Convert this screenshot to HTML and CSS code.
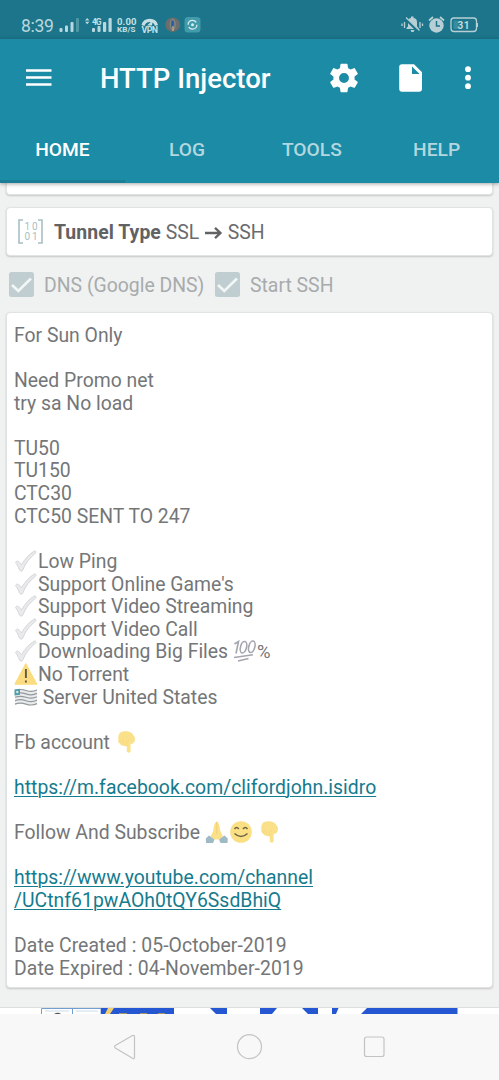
FILE: index.html
```html
<!DOCTYPE html>
<html lang="en">
<head>
<meta charset="utf-8">
<title>HTTP Injector</title>
<link rel="stylesheet" href="styles.css">
</head>
<body>
<svg class="defs" aria-hidden="true">
  <symbol id="tick" viewBox="0 0 24 22"><path d="M1.500 12.500 C3 10 5 11 7.500 14.800 C11 9 15 4 20.500 1 C21.800 .6 22.500 2 21.500 3.200 C15.500 8 11.500 13 8.800 20 C8 21.800 6.200 21.500 5.300 19.600 C4.400 17 3.300 14.800 1.500 12.500Z" fill="#e9eaec" stroke="#d0d2d4" stroke-width=".9"/></symbol>
  <symbol id="point" viewBox="0 0 20 22"><path d="M4 1 C8-.2 12 .2 15 2.2 L17.7 6 C18.4 9 17.5 12 15 12.9 L13.6 12.6 V20 C13.5 22.2 10 22.2 9.8 20 V15 C8.4 15.6 7 15.2 6.4 14.4 C4.8 14.9 3.2 13.8 3 12.4 C1.4 11.9.9 10 1.4 8.6 C.9 5.8 1.5 2.5 4 1Z" fill="#fbe08a"/><path d="M5.7 8.7 6.3 14 M3 8.8 3.2 12 M9.8 15 9.500 10.5 12 9.5" fill="none" stroke="#f5d477" stroke-width=".7"/></symbol>
  <symbol id="checkbox" viewBox="0 0 25 25"><rect width="25" height="25" rx="2.5" fill="#c0ced1"/><path d="M3 13 9.3 19 22 6.5" fill="none" stroke="#f3f6f6" stroke-width="2.6"/></symbol>
</svg>
<div class="screen">
  <header class="status">
    <span class="clock">8:39</span>
    <svg class="status-left" width="145" height="22" viewBox="57 14 145 22">
      <g fill="#b9d7de"><rect x="59.5" y="28" width="3" height="4" rx="1"/><rect x="65" y="25.500" width="3" height="6.500" rx="1"/><rect x="70.500" y="22" width="3" height="10" rx="1"/><rect x="76" y="18" width="3" height="14" rx="1" fill="#4d98a5"/>
      <path d="M85 20.500 87.200 18 89.400 20.500Z M85 21.700 87.200 24.200 89.400 21.700Z"/><rect x="92" y="28" width="3" height="4" rx="1"/><rect x="97.500" y="26" width="3" height="6" rx="1"/><rect x="103" y="22" width="3.200" height="10" rx="1"/><rect x="108.500" y="18" width="3.200" height="14" rx="1"/></g>
      <g class="tiny"><text x="92" y="24.500" font-size="8.500" textLength="9.500">4G</text><text x="117" y="24.500" font-size="9.500" textLength="19.500">0.00</text><text x="117" y="32" font-size="8" textLength="18.500">KB/S</text><text x="141.500" y="33" font-size="8.800" textLength="16.500">VPN</text></g>
      <path d="M143 25.500 A7 7 0 0 1 156.500 25.500" fill="none" stroke="#c5e0e4" stroke-width="3.200"/><path d="M147 25.500 L153 20 L152 25.500Z" fill="#c5e0e4"/>
      <circle cx="172.700" cy="24.700" r="7.300" fill="#6b6e6d"/><ellipse cx="172.700" cy="24.500" rx="2.500" ry="5.300" fill="none" stroke="#8b949c" stroke-width=".8"/><path d="M172.500 21V27" stroke="#285a9b" stroke-width="1.800"/><path d="M173 26V31" stroke="#e2bd8b"/>
      <rect x="184.500" y="17" width="16" height="15.500" rx="3.500" fill="#429baa"/><circle cx="192.500" cy="24.700" r="4.400" fill="none" stroke="#d6edef" stroke-width="1.300" stroke-dasharray="11 2.500"/><circle cx="192.500" cy="24.700" r="1.500" fill="#d6edef"/>
    </svg>
    <svg class="status-right" width="80" height="22" viewBox="400 14 80 22">
      <g fill="#b8d0d5"><path d="M406.500 29 V28 L408 26.500 V22 C408 19.500 409.500 18 411 17.700 V16.500 H413.500 V17.700 C416 18.300 417 20 417 22 V26.500 L418.500 28 V29Z M410.500 30H414.500L413.500 32H411.500Z"/><path d="M405 18 418.500 31.500" stroke="#1c758a" stroke-width="3"/><path d="M406 17.500 419.500 30.500 M404.500 22V28 M402 23.500V26 M420 22V28 M422.500 23.500V26" fill="none" stroke="#b8d0d5" stroke-width="1.300"/>
      <circle cx="436.500" cy="25.500" r="7.200"/><path d="M429 20.500 433 17 M440 17 444 20.500" stroke="#b8d0d5" stroke-width="1.700"/></g><path d="M436.500 21V26H440" fill="none" stroke="#1c758a" stroke-width="1.500"/>
      <rect x="451" y="18" width="25.500" height="13.500" rx="3" fill="none" stroke="#b8d0d5" stroke-width="1.300"/><rect x="453.500" y="20.500" width="5" height="8.500" fill="#378d9d"/><path d="M477.300 23V27" stroke="#b8d0d5" stroke-width="1.400"/><text class="battery" x="457.500" y="29" textLength="12">31</text>
    </svg>
  </header>
  <div class="appbar">
    <div class="toolbar">
      <svg class="menu" width="26" height="18"><path d="M0 1.500H25.500M0 8.500H25.500M0 15.500H25.500" stroke="#fff" stroke-width="2.600"/></svg>
      <h1 class="title">HTTP Injector</h1>
      <svg class="gear" width="34" height="34" viewBox="0 0 24 24"><path fill="#fff" d="M19.430 12.980c.04-.32.070-.64.070-.98s-.03-.66-.07-.98l2.110-1.650c.19-.15.240-.42.120-.64l-2-3.460c-.12-.22-.39-.3-.61-.22l-2.490 1c-.52-.4-1.080-.73-1.690-.98l-.38-2.650A.488.488 0 0 0 14 2h-4c-.25 0-.46.18-.49.42l-.38 2.650c-.61.250-1.170.590-1.690.98l-2.490-1c-.23-.09-.49 0-.61.220l-2 3.460c-.13.220-.07.490.120.640l2.110 1.650c-.04.320-.07.650-.07.980s.03.660.07.980l-2.110 1.650c-.19.150-.24.420-.12.640l2 3.460c.12.220.39.300.61.220l2.490-1c.52.400 1.080.730 1.690.980l.38 2.650c.03.240.24.420.49.420h4c.25 0 .46-.18.49-.42l.38-2.650c.61-.25 1.170-.59 1.690-.98l2.490 1c.23.090.49 0 .61-.22l2-3.460c.12-.22.070-.49-.12-.64zM12 15.500a3.500 3.500 0 1 1 0-7 3.500 3.500 0 0 1 0 7z"/></svg>
      <svg class="file" width="24" height="28"><path fill="#fff" fill-rule="evenodd" d="M3 .3H15L23 8.300V24.500Q23 27.700 20 27.700H3Q.2 27.700.2 24.700V3Q.2.300 3 .300ZM13 2.500V10H20.600Z"/></svg>
      <svg class="more" width="6" height="24"><g fill="#fff"><circle cx="3" cy="3.200" r="2.900"/><circle cx="3" cy="11.700" r="2.900"/><circle cx="3" cy="20.200" r="2.900"/></g></svg>
    </div>
    <nav class="tabs"><a class="tab active">HOME</a><a class="tab">LOG</a><a class="tab">TOOLS</a><a class="tab">HELP</a></nav>
  </div>
  <main class="content">
    <div class="card stub"></div>
    <section class="card tunnel">
      <svg width="26" height="25"><path d="M5 1H1V24H5M20 1H24V24H20" fill="none" stroke="#a8bfc2" stroke-width="1.600"/><g class="bits"><text x="6.500" y="11" textLength="13">10</text><text x="6.500" y="20.800" textLength="13">01</text></g></svg>
      <div class="tunnel-text"><b>Tunnel Type</b> SSL <svg width="19" height="14" viewBox="0 0 19 14"><path d="M1 7H16M11 1.800 16.500 7 11 12.200" fill="none" stroke="#606264" stroke-width="2.300"/></svg> SSH</div>
    </section>
    <div class="options">
      <svg width="25" height="25"><use href="#checkbox"/></svg><span class="dns">DNS (Google DNS)</span>
      <svg width="25" height="25"><use href="#checkbox"/></svg><span class="ssh">Start SSH</span>
    </div>
    <section class="card notes">
      <p>For Sun Only</p>
      <p></p>
      <p>Need Promo net</p>
      <p>try sa No load</p>
      <p></p>
      <p>TU50</p>
      <p>TU150</p>
      <p>CTC30</p>
      <p>CTC50 SENT TO 247</p>
      <p></p>
      <p><svg class="emoji"><use href="#tick"/></svg>Low Ping</p>
      <p><svg class="emoji"><use href="#tick"/></svg>Support Online Game's</p>
      <p><svg class="emoji"><use href="#tick"/></svg>Support Video Streaming</p>
      <p><svg class="emoji"><use href="#tick"/></svg>Support Video Call</p>
      <p><svg class="emoji"><use href="#tick"/></svg>Downloading Big Files <svg class="emoji" viewBox="0 0 24 22"><g fill="none" stroke="#a4a6ad" stroke-width="1.600"><path d="M1.500 4 5.500 1.500 3 13.500"/><ellipse cx="10.500" cy="7.200" rx="3" ry="5.900" transform="rotate(15 10.500 7.200)"/><ellipse cx="18.800" cy="6.800" rx="3" ry="5.900" transform="rotate(15 18.800 6.800)"/><path d="M1 17.500 20 14.800M5 21 15.500 18.500" stroke-width="1.400"/></g></svg><span class="percent">%</span></p>
      <p><svg class="emoji" viewBox="0 0 24 22"><path d="M11.800 1 22.500 21H1.200Z" fill="#fbdc80" stroke="#fbdc80" stroke-width="1.500" stroke-linejoin="round"/><path d="M11.900 6V15M11.900 17.500V19.500" stroke="#605a48" stroke-width="1.900"/></svg>No Torrent</p>
      <p><svg class="emoji" viewBox="0 0 24 22"><path d="M1 4 Q6 2 12 4 T23 3.500 V18 Q17 20 12 18 T1 18.500Z" fill="#e9ebec"/><g fill="none" stroke="#93999d" stroke-width="1.200"><path id="stripe" d="M1 4.500 Q6 2.500 12 4.500 T23 4"/><use href="#stripe" y="3.400"/><use href="#stripe" y="6.800"/><use href="#stripe" y="10.200"/><use href="#stripe" y="13.600"/></g><path d="M.5 3.500 6 2.800V8.800L.5 9.500Z" fill="#529caa"/><circle cx="3.300" cy="6" r="1.200" fill="#d8e7ea"/></svg> Server United States</p>
      <p></p>
      <p>Fb account <svg class="emoji hand"><use href="#point"/></svg></p>
      <p></p>
      <p><a class="fb-link">https://m.facebook.com/clifordjohn.isidro</a></p>
      <p></p>
      <p>Follow And Subscribe <svg class="emoji" viewBox="0 0 24 22"><path d="M11.800.5 C9.500 1 9 5 8.200 10 L5.500 15.500 9 18.500H14.500L18 15.500 15.300 10 C14.500 5 14 1 11.800.500Z" fill="#fbe08a"/><path d="M11.800 1V13" stroke="#edcc72" stroke-width=".7"/><path d="M4 14.500 9.500 18.500 8 22H1L.8 17.500ZM19.500 14.500 14 18.500 15.500 22H22.500L22.800 17.500Z" fill="#9fb9c5"/></svg><svg class="emoji" viewBox="0 0 24 22"><circle cx="12" cy="11" r="10.800" fill="#fbdf83"/><path d="M5.500 8 Q7.500 5 9.800 8M14 8 Q16.300 5 18.500 8M5.500 12.500 Q12 18.500 18.500 12.500" fill="none" stroke="#6e6548" stroke-width="1.500"/></svg> <svg class="emoji hand"><use href="#point"/></svg></p>
      <p></p>
      <p><a class="yt-link">https://www.youtube.com/channel</a></p>
      <p><a class="yt-path">/UCtnf61pwAOh0tQY6SsdBhiQ</a></p>
      <p></p>
      <p class="date">Date Created : 05-October-2019</p>
      <p class="date">Date Expired : 04-November-2019</p>
    </section>
  </main>
  <div class="banner"><svg width="499" height="7"><path d="M0 .5H499" stroke="#dedede"/><path d="M41.500 7V1.500H101V7M72.500 2V7" fill="none" stroke="#739ed2"/><path d="M45 4H69M76 4H98" stroke="#c9dcea" stroke-width="1"/><path d="M54 7Q58 4.500 61 7Z" fill="#555"/><path d="M101 1H174V7H101ZM210 1H227V7H216ZM260 1H277L272 7H260ZM302 1H318V7H308ZM332 1H338.500L336 7H332ZM367 1H457.500V7H361Z" fill="#2457d1"/><path d="M108 1H114L110 7H105Z" fill="#f2ce72"/><path d="M119 6.500H127M140 6.500H147M158 6.500H165" stroke="#a3976c" stroke-width="1"/></svg></div>
  <footer class="navbar"><svg width="499" height="66"><g fill="none" stroke="#c3c3c3" stroke-width="1.200"><path d="M132.500 21.500Q134.500 20.800 134.500 23V43.500Q134.500 45.300 132.500 44.300L115.300 34Q113.800 32.700 115.300 31.600Z"/><circle cx="249.500" cy="32.700" r="12"/><rect x="364.500" y="23" width="19.500" height="19.500" rx="2"/></g></svg></footer>
</div>
</body>
</html>
```
FILE: styles.css
```css
* { box-sizing: border-box; }
body { margin: 0; font-family: Roboto, "Liberation Sans", sans-serif; background: #f0f1f1; }
svg { display: block; flex: none; }
.defs { position: absolute; width: 0; height: 0; }
.screen { width: 499px; height: 1080px; display: flex; flex-direction: column; overflow: hidden; }
.status { height: 39px; flex: none; background: #1c758a; display: flex; align-items: flex-start; padding: 14px 19px 0 21px; }
.clock { width: 36px; font-size: 17.5px; line-height: 24px; color: #b9d7de; letter-spacing: -.3px; }
.status-right { margin-left: auto; }
.tiny { fill: #c5e0e4; font-weight: 700; }
.battery { fill: #c5d9dd; font-size: 10px; font-weight: 700; }
.appbar { height: 144px; flex: none; background: #1c8ba5; box-shadow: 0 1px 4px rgba(0, 0, 0, .35); z-index: 1; }
.toolbar { height: 78px; display: flex; align-items: center; padding: 0 28px 0 26px; }
.menu { width: 74px; }
.title { width: 227px; margin: 0; padding-top: 2px; font-size: 27.5px; font-weight: 500; line-height: 30px; color: #fff; white-space: nowrap; }
.file { margin-left: 38px; }
.more { margin-left: 42px; }
.tabs { height: 66px; display: grid; grid-template-columns: repeat(4, 1fr); }
.tab { text-align: center; font-size: 19.2px; font-weight: 500; line-height: 66px; color: #b3d7df; }
.active { height: 66px; color: #fff; border-bottom: 3px solid #1a7f96; }
.content { height: 824px; flex: none; padding: 0 6px; background: #f0f1f1; }
.card { background: #fff; border: 1px solid #e0e3e3; border-radius: 4px; box-shadow: 0 1px 2px rgba(0, 0, 0, .18); }
.stub { height: 12px; border-top: 0; border-radius: 0 0 4px 4px; }
.tunnel { height: 49px; margin-top: 12px; display: flex; align-items: center; padding-left: 11px; gap: 10px; color: #696b6d; font-size: 19.4px; }
.tunnel-text { padding-top: 2px; white-space: nowrap; }
.tunnel-text svg { display: inline-block; vertical-align: -1px; }
.tunnel-text b { font-weight: 700; color: #606264; letter-spacing: .06px; }
.options { height: 56px; display: flex; align-items: center; padding-left: 3px; font-size: 19.4px; color: #a7abac; white-space: nowrap; }
.dns { width: 171px; margin-left: 10px; padding-top: 2px; }
.ssh { margin-left: 10px; padding-top: 2px; }
.bits { fill: #a8bfc2; font-size: 10px; }
.notes { height: 676px; padding: 11.8px 7px; font-size: 19.36px; line-height: 22.61px; color: #747678; }
.notes p { height: 22.61px; margin: 0; white-space: pre; }
.notes a { color: #157b8e; letter-spacing: .03px; text-decoration: underline; text-decoration-thickness: 1px; text-underline-offset: 2px; }
.notes .date { letter-spacing: .07px; }
.emoji { display: inline-block; width: 24px; height: 22px; margin: -5px 0; vertical-align: 1px; }
.hand { width: 20px; margin-left: 2px; }
.percent { font-size: 18.5px; }
.banner { height: 7px; flex: none; background: #fff; }
.navbar { height: 66px; flex: none; background: #f8f8f8; }
```
